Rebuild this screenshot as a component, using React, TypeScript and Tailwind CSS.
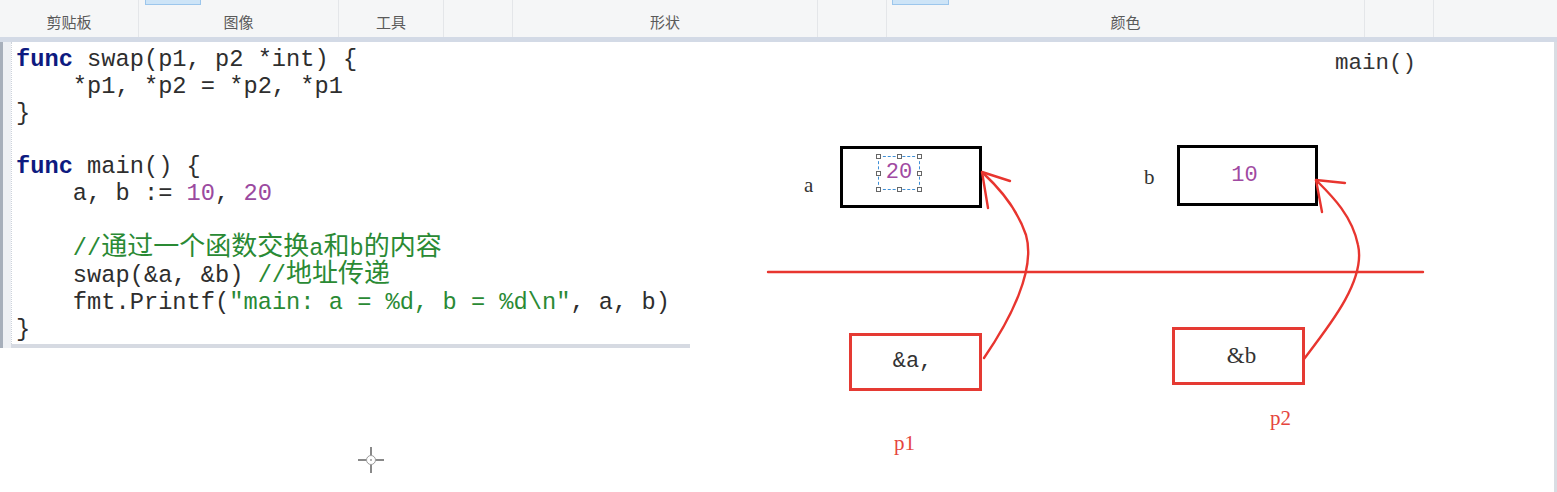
import React from 'react';

const mono = "font-['Liberation_Mono','Noto_Sans_CJK_SC',monospace]";
const serif = "font-['Liberation_Serif','Noto_Sans_CJK_SC',serif]";

const Kw = ({ children }: { children: React.ReactNode }) => (
  <span className="font-bold text-[#0d1a80]">{children}</span>
);
const Num = ({ children }: { children: React.ReactNode }) => (
  <span className="text-[#9b4a9f]">{children}</span>
);
const Cmt = ({ children }: { children: React.ReactNode }) => (
  <span className="text-[#2a8a34]">{children}</span>
);
// chinese glyphs in the pasted code render a bit wider than the mono cells
const Zh = ({ children }: { children: React.ReactNode }) => (
  <span className="text-[26px]">{children}</span>
);

const Handle = ({ className }: { className: string }) => (
  <span className={`absolute w-[5px] h-[5px] bg-white border border-[#666] ${className}`} />
);

const Ribbon = () => {
  const groups = [
    { w: 'w-[139px]', label: '剪贴板' },
    { w: 'w-[200px]', label: '图像' },
    { w: 'w-[105px]', label: '工具' },
    { w: 'w-[69px]', label: '' },
    { w: 'w-[305px]', label: '形状' },
    { w: 'w-[69px]', label: '' },
    { w: 'w-[478px]', label: '颜色' },
    { w: 'w-[69px]', label: '' },
  ];
  return (
    <div className="relative h-[37px] flex bg-[#f5f6f7] font-['Noto_Sans_CJK_SC',sans-serif] text-[15px] text-[#5a5a5a]">
      {groups.map((g, i) => (
        <div key={i} className={`${g.w} shrink-0 border-r border-[#e4e6e9] flex items-end justify-center pb-[4px] leading-[22px]`}>
          {g.label}
        </div>
      ))}
      <div className="flex-1" />
      {/* selected tool buttons peeking from above */}
      <div className="absolute left-[145px] top-[-2px] w-[56px] h-[7px] bg-[#cde4f7] border border-[#9cc6ec]" />
      <div className="absolute left-[892px] top-[-2px] w-[57px] h-[7px] bg-[#cde4f7] border border-[#9cc6ec]" />
    </div>
  );
};

const Code = () => (
  <div className="w-[690px] h-[306px] flex shrink-0">
    <div className="w-[3px] bg-[#a7afbb]" />
    <div className="w-[8px] bg-[#eef0f4]" />
    <div className="flex-1 flex flex-col">
      <div className="flex-1 flex">
        <div className="w-0 border-l border-dotted border-[#cdd3db]" />
        <div className={`flex-1 pl-[4px] pt-[5px] text-[23.7px] leading-[26.8px] text-[#2e2e2e] whitespace-pre ${mono}`}>
          <div><Kw>func</Kw> swap(p1, p2 *int) {'{'}</div>
          <div>    *p1, *p2 = *p2, *p1</div>
          <div>{'}'}</div>
          <div> </div>
          <div><Kw>func</Kw> main() {'{'}</div>
          <div>    a, b := <Num>10</Num>, <Num>20</Num></div>
          <div> </div>
          <div>    <Cmt>//<Zh>通过一个函数交换</Zh>a<Zh>和</Zh>b<Zh>的内容</Zh></Cmt></div>
          <div>    swap(&amp;a, &amp;b) <Cmt>//<Zh>地址传递</Zh></Cmt></div>
          <div>    fmt.Printf(<Cmt>"main: a = %d, b = %d\n"</Cmt>, a, b)</div>
          <div>{'}'}</div>
        </div>
      </div>
      <div className="h-[5px] bg-[#d6dae2]" />
    </div>
  </div>
);

const Diagram = () => (
  <>
    <span className={`absolute left-[1335px] top-[9px] leading-[24px] text-[22.5px] text-[#333] ${mono}`}>main()</span>

    <span className={`absolute left-[804px] top-[131px] leading-[24px] text-[21px] text-[#333] ${serif}`}>a</span>
    <div className="absolute left-[840px] top-[104px] w-[142px] h-[62px] border-[3px] border-black bg-white">
      <div className="absolute left-[35px] top-[7px] w-[42px] h-[34px] border border-dashed border-[#3f8fd6] flex items-center justify-center">
        <span className={`text-[22px] leading-[24px] text-[#a04aa2] ${mono}`}>20</span>
        <Handle className="-left-[3px] -top-[3px]" />
        <Handle className="left-[18px] -top-[3px]" />
        <Handle className="-right-[3px] -top-[3px]" />
        <Handle className="-left-[3px] top-[14px]" />
        <Handle className="-right-[3px] top-[14px]" />
        <Handle className="-left-[3px] -bottom-[3px]" />
        <Handle className="left-[18px] -bottom-[3px]" />
        <Handle className="-right-[3px] -bottom-[3px]" />
      </div>
    </div>

    <span className={`absolute left-[1144px] top-[123px] leading-[24px] text-[21px] text-[#333] ${serif}`}>b</span>
    <div className="absolute left-[1177px] top-[103px] w-[141px] h-[61px] border-[3px] border-black bg-white flex items-center justify-center pr-[6px]">
      <span className={`text-[22px] leading-[24px] text-[#a04aa2] ${mono}`}>10</span>
    </div>

    <div className="absolute left-[849px] top-[291px] w-[133px] h-[58px] border-[3px] border-[#e53a33] bg-white flex items-center justify-center pr-[6px]">
      <span className={`text-[22px] leading-[24px] text-[#333] ${mono}`}>&amp;a,</span>
    </div>
    <span className={`absolute left-[894px] top-[389px] leading-[24px] text-[21px] text-[#e5453d] ${serif}`}>p1</span>

    <div className="absolute left-[1172px] top-[285px] w-[133px] h-[58px] border-[3px] border-[#e53a33] bg-white flex items-center justify-center pl-[6px]">
      <span className={`text-[23px] leading-[24px] text-[#333] ${serif}`}>&amp;b</span>
    </div>
    <span className={`absolute left-[1270px] top-[364px] leading-[24px] text-[21px] text-[#e5453d] ${serif}`}>p2</span>

    <svg className="absolute inset-0 pointer-events-none" width="1557" height="450" viewBox="0 0 1557 450">
      <g fill="none" stroke="#e8352f" strokeWidth="2.4" strokeLinecap="round" strokeLinejoin="round">
        <line x1="768" y1="230" x2="1423" y2="230" />
        <path d="M 984 316 C 1010 278, 1036 228, 1026 193 C 1016 163, 996 143, 983 131" />
        <path d="M 1010 139 L 982 130 L 988 166" />
        <path d="M 1304 317 C 1330 283, 1366 238, 1358 203 C 1352 173, 1331 153, 1316 138" />
        <path d="M 1345 141 L 1316 138 L 1322 170" />
      </g>
      <g stroke="#4a4a4a" strokeWidth="1.3">
        <line x1="371" y1="405" x2="371" y2="413" />
        <line x1="371" y1="423" x2="371" y2="431" />
        <line x1="358" y1="418" x2="366" y2="418" />
        <line x1="376" y1="418" x2="384" y2="418" />
        <circle cx="371" cy="418" r="4.5" fill="none" stroke="#9a9a9a" strokeWidth="1" />
        <circle cx="371" cy="418" r="0.8" fill="#555" stroke="none" />
      </g>
    </svg>
  </>
);

export default function App() {
  return (
    <div className="w-[1557px] h-[492px] overflow-hidden flex flex-col bg-white">
      <Ribbon />
      <div className="h-[5px] bg-[#d3dae6] shrink-0" />
      <div className="relative flex-1 flex">
        <Code />
        <div className="flex-1" />
        <div className="w-[3px] bg-[#d9dde3]" />
        <Diagram />
      </div>
    </div>
  );
}
